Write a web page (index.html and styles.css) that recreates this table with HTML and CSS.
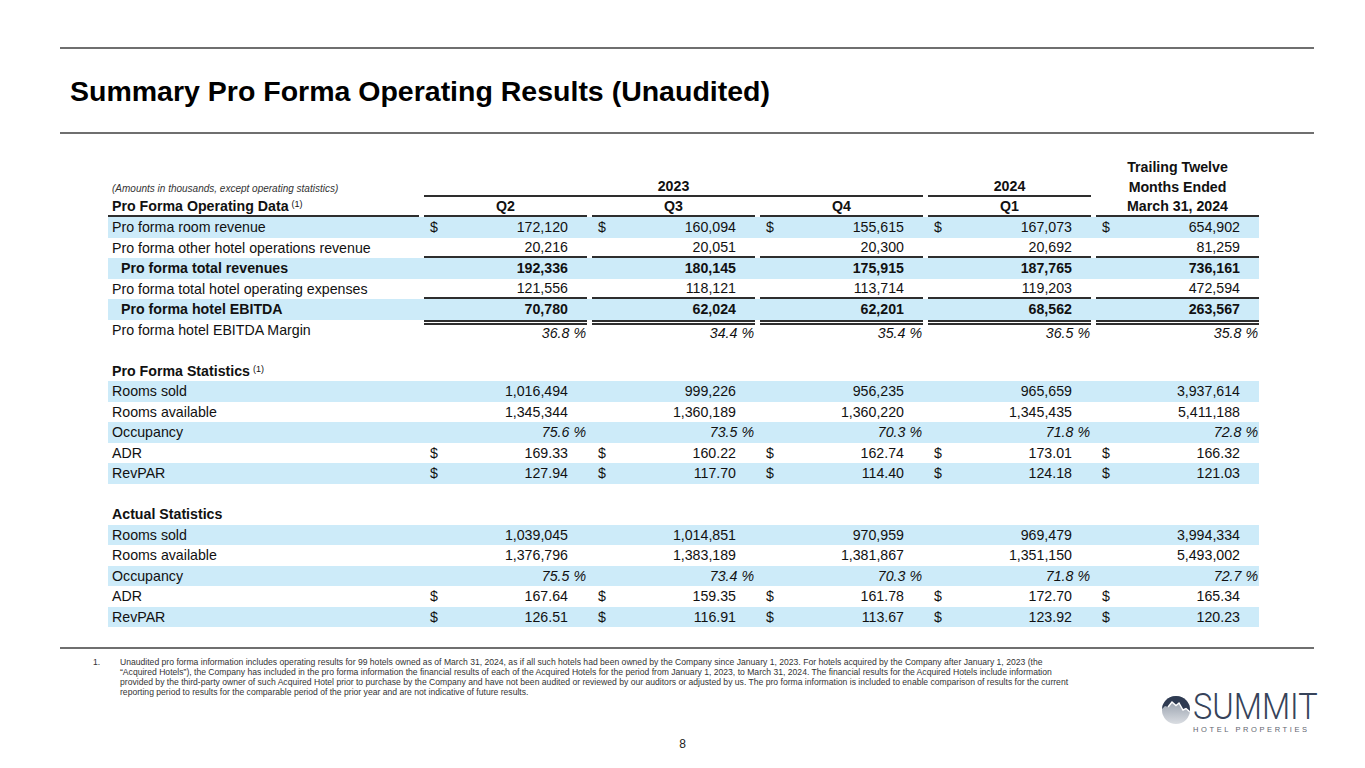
FILE: index.html
```html
<!DOCTYPE html>
<html>
<head>
<meta charset="utf-8">
<title>Summary Pro Forma Operating Results</title>
<link rel="stylesheet" href="styles.css">
</head>
<body>
<div class="slide">
  <div class="rule"></div>
  <h1 class="title">Summary Pro Forma Operating Results (Unaudited)</h1>
  <div class="rule"></div>

  <div class="table">
    <div class="row hdr">
      <div class="c"></div><div class="c"></div><div class="c"></div><div class="c"></div><div class="c"></div>
      <div class="c h">Trailing Twelve</div>
    </div>
    <div class="row hdr">
      <div class="c lbl note">(Amounts in thousands, except operating statistics)</div>
      <div class="c h span3 u">2023</div>
      <div class="c h u">2024</div>
      <div class="c h">Months Ended</div>
    </div>
    <div class="row hdr">
      <div class="c lbl b u">Pro Forma Operating Data<sup>(1)</sup></div>
      <div class="c h u">Q2</div>
      <div class="c h u">Q3</div>
      <div class="c h u">Q4</div>
      <div class="c h u">Q1</div>
      <div class="c h u">March 31, 2024</div>
    </div>

    <div class="row band">
      <div class="c lbl">Pro forma room revenue</div>
      <div class="c n d"><span>$</span><span>172,120</span></div>
      <div class="c n d"><span>$</span><span>160,094</span></div>
      <div class="c n d"><span>$</span><span>155,615</span></div>
      <div class="c n d"><span>$</span><span>167,073</span></div>
      <div class="c n d"><span>$</span><span>654,902</span></div>
    </div>
    <div class="row">
      <div class="c lbl">Pro forma other hotel operations revenue</div>
      <div class="c n u">20,216</div>
      <div class="c n u">20,051</div>
      <div class="c n u">20,300</div>
      <div class="c n u">20,692</div>
      <div class="c n u">81,259</div>
    </div>
    <div class="row band b">
      <div class="c lbl ind">Pro forma total revenues</div>
      <div class="c n">192,336</div>
      <div class="c n">180,145</div>
      <div class="c n">175,915</div>
      <div class="c n">187,765</div>
      <div class="c n">736,161</div>
    </div>
    <div class="row">
      <div class="c lbl">Pro forma total hotel operating expenses</div>
      <div class="c n u">121,556</div>
      <div class="c n u">118,121</div>
      <div class="c n u">113,714</div>
      <div class="c n u">119,203</div>
      <div class="c n u">472,594</div>
    </div>
    <div class="row band b">
      <div class="c lbl ind">Pro forma hotel EBITDA</div>
      <div class="c n">70,780</div>
      <div class="c n">62,024</div>
      <div class="c n">62,201</div>
      <div class="c n">68,562</div>
      <div class="c n">263,567</div>
    </div>
    <div class="row">
      <div class="c lbl">Pro forma hotel EBITDA Margin</div>
      <div class="c n i dt">36.8<span class="pc">%</span></div>
      <div class="c n i dt">34.4<span class="pc">%</span></div>
      <div class="c n i dt">35.4<span class="pc">%</span></div>
      <div class="c n i dt">36.5<span class="pc">%</span></div>
      <div class="c n i dt">35.8<span class="pc">%</span></div>
    </div>
    <div class="row"></div>

    <div class="row">
      <div class="c lbl b">Pro Forma Statistics<sup>(1)</sup></div>
    </div>
    <div class="row band">
      <div class="c lbl">Rooms sold</div>
      <div class="c n">1,016,494</div>
      <div class="c n">999,226</div>
      <div class="c n">956,235</div>
      <div class="c n">965,659</div>
      <div class="c n">3,937,614</div>
    </div>
    <div class="row">
      <div class="c lbl">Rooms available</div>
      <div class="c n">1,345,344</div>
      <div class="c n">1,360,189</div>
      <div class="c n">1,360,220</div>
      <div class="c n">1,345,435</div>
      <div class="c n">5,411,188</div>
    </div>
    <div class="row band">
      <div class="c lbl">Occupancy</div>
      <div class="c n i">75.6<span class="pc">%</span></div>
      <div class="c n i">73.5<span class="pc">%</span></div>
      <div class="c n i">70.3<span class="pc">%</span></div>
      <div class="c n i">71.8<span class="pc">%</span></div>
      <div class="c n i">72.8<span class="pc">%</span></div>
    </div>
    <div class="row">
      <div class="c lbl">ADR</div>
      <div class="c n d"><span>$</span><span>169.33</span></div>
      <div class="c n d"><span>$</span><span>160.22</span></div>
      <div class="c n d"><span>$</span><span>162.74</span></div>
      <div class="c n d"><span>$</span><span>173.01</span></div>
      <div class="c n d"><span>$</span><span>166.32</span></div>
    </div>
    <div class="row band">
      <div class="c lbl">RevPAR</div>
      <div class="c n d"><span>$</span><span>127.94</span></div>
      <div class="c n d"><span>$</span><span>117.70</span></div>
      <div class="c n d"><span>$</span><span>114.40</span></div>
      <div class="c n d"><span>$</span><span>124.18</span></div>
      <div class="c n d"><span>$</span><span>121.03</span></div>
    </div>
    <div class="row"></div>

    <div class="row">
      <div class="c lbl b">Actual Statistics</div>
    </div>
    <div class="row band">
      <div class="c lbl">Rooms sold</div>
      <div class="c n">1,039,045</div>
      <div class="c n">1,014,851</div>
      <div class="c n">970,959</div>
      <div class="c n">969,479</div>
      <div class="c n">3,994,334</div>
    </div>
    <div class="row">
      <div class="c lbl">Rooms available</div>
      <div class="c n">1,376,796</div>
      <div class="c n">1,383,189</div>
      <div class="c n">1,381,867</div>
      <div class="c n">1,351,150</div>
      <div class="c n">5,493,002</div>
    </div>
    <div class="row band">
      <div class="c lbl">Occupancy</div>
      <div class="c n i">75.5<span class="pc">%</span></div>
      <div class="c n i">73.4<span class="pc">%</span></div>
      <div class="c n i">70.3<span class="pc">%</span></div>
      <div class="c n i">71.8<span class="pc">%</span></div>
      <div class="c n i">72.7<span class="pc">%</span></div>
    </div>
    <div class="row">
      <div class="c lbl">ADR</div>
      <div class="c n d"><span>$</span><span>167.64</span></div>
      <div class="c n d"><span>$</span><span>159.35</span></div>
      <div class="c n d"><span>$</span><span>161.78</span></div>
      <div class="c n d"><span>$</span><span>172.70</span></div>
      <div class="c n d"><span>$</span><span>165.34</span></div>
    </div>
    <div class="row band">
      <div class="c lbl">RevPAR</div>
      <div class="c n d"><span>$</span><span>126.51</span></div>
      <div class="c n d"><span>$</span><span>116.91</span></div>
      <div class="c n d"><span>$</span><span>113.67</span></div>
      <div class="c n d"><span>$</span><span>123.92</span></div>
      <div class="c n d"><span>$</span><span>120.23</span></div>
    </div>
  </div>

  <div class="rule low"></div>

  <div class="foot">
    <div class="fn-num">1.</div>
    <div class="fn-text">Unaudited pro forma information includes operating results for 99 hotels owned as of March 31, 2024, as if all such hotels had been owned by the Company since January 1, 2023. For hotels acquired by the Company after January 1, 2023 (the<br>“Acquired Hotels”), the Company has included in the pro forma information the financial results of each of the Acquired Hotels for the period from January 1, 2023, to March 31, 2024. The financial results for the Acquired Hotels include information<br>provided by the third-party owner of such Acquired Hotel prior to purchase by the Company and have not been audited or reviewed by our auditors or adjusted by us. The pro forma information is included to enable comparison of results for the current<br>reporting period to results for the comparable period of the prior year and are not indicative of future results.</div>
  </div>

  <div class="logo-row">
    <div class="logo">
      <svg class="logo-icon" width="28" height="42" viewBox="0 0 28 42">
        <defs>
          <clipPath id="lc"><circle cx="14" cy="19" r="14"/></clipPath>
          <linearGradient id="lg" x1="0" y1="0" x2="0" y2="1">
            <stop offset="0" stop-color="#7b8696"/>
            <stop offset="1" stop-color="#f4f5f7"/>
          </linearGradient>
        </defs>
        <g clip-path="url(#lc)">
          <rect x="0" y="0" width="28" height="42" fill="url(#lg)"/>
          <path d="M0 0 H28 V21 L24 17.5 L21 19 L17 12 L14 14.5 L10 11 L6 16 L3 15 L0 18 Z" fill="#2f3b52"/>
          <path d="M6 16 L10 11 L14 14.5 L17 12 L21 19 L24 17.5 L28 21" fill="none" stroke="#ffffff" stroke-width="1.4"/>
        </g>
      </svg>
      <div class="logo-text">
        <div class="logo-name">SUMMIT</div>
        <div class="logo-sub">HOTEL PROPERTIES</div>
      </div>
    </div>
  </div>

  <div class="page-num">8</div>
</div>
</body>
</html>
```

FILE: styles.css
```css
* { box-sizing: border-box; }
html, body { margin: 0; padding: 0; }
body {
  width: 1365px;
  height: 768px;
  overflow: hidden;
  background: #ffffff;
  font-family: "Liberation Sans", Arial, sans-serif;
  color: #000000;
}
.slide {
  width: 1365px;
  height: 768px;
  padding-top: 47px;
}
.rule {
  width: 1254px;
  height: 2px;
  margin-left: 60px;
  background: #6f6f6f;
}
.title {
  margin: 0 0 0 70px;
  padding: 26px 0 25px;
  font-size: 28.5px;
  line-height: 32px;
  font-weight: bold;
  color: #000000;
}

/* table */
.table {
  margin: 23px 0 0 108px;
  width: 1151px;
  font-size: 14.2px;
  color: #111111;
}
.row {
  display: grid;
  grid-template-columns: 311px repeat(5, 163px);
  column-gap: 5px;
  height: 20.5px;
}
.row.hdr { height: 20px; }
.band { background: #cdebf9; }
.c {
  display: flex;
  align-items: center;
  white-space: nowrap;
  min-width: 0;
}
.lbl { padding-left: 4px; }
.ind { padding-left: 13px; }
.b { font-weight: bold; }
.i { font-style: italic; }
.note {
  font-size: 10px;
  font-style: italic;
  color: #333333;
  padding-top: 2px;
}
.h {
  justify-content: center;
  font-weight: bold;
}
.span3 { grid-column: span 3; }
.n {
  justify-content: flex-end;
  padding: 0 19px 0 6px;
}
.n.d { justify-content: space-between; }
.u { border-bottom: 2px solid #2e2e2e; }
.dt { border-top: 5px double #2e2e2e; }
.pc {
  margin-left: 4px;
  margin-right: -18px;
}
sup {
  font-size: 9px;
  font-weight: normal;
  margin-left: 3px;
  position: relative;
  top: -2px;
  vertical-align: super;
  line-height: 0;
}

.low { margin-top: 20px; }

/* footnote */
.foot {
  display: grid;
  grid-template-columns: 27px 1fr;
  margin: 8px 0 0 93px;
  width: 1200px;
  font-size: 8.6px;
  line-height: 10px;
  color: #333333;
}
.fn-text { white-space: nowrap; }

/* logo */
.logo-row {
  display: flex;
  justify-content: flex-end;
  padding-right: 50px;
  margin-top: -6px;
}
.logo {
  display: flex;
  align-items: flex-start;
  gap: 3px;
}
.logo-icon { display: block; }
.logo-text {
  display: flex;
  flex-direction: column;
  align-items: flex-start;
  width: 122px;
}
.logo-name {
  font-family: Roboto, "Noto Sans", sans-serif;
  font-weight: 300;
  font-size: 37px;
  line-height: 32px;
  color: #36435a;
  transform: scaleX(0.88);
  transform-origin: left center;
  white-space: nowrap;
}
.logo-sub {
  font-family: "Liberation Sans", Arial, sans-serif;
  font-size: 7.5px;
  line-height: 9px;
  letter-spacing: 2.6px;
  color: #5f6670;
  margin-top: 2px;
  white-space: nowrap;
}

.page-num {
  margin-top: 3px;
  text-align: center;
  font-size: 12px;
  line-height: 14px;
  color: #222222;
}
```
